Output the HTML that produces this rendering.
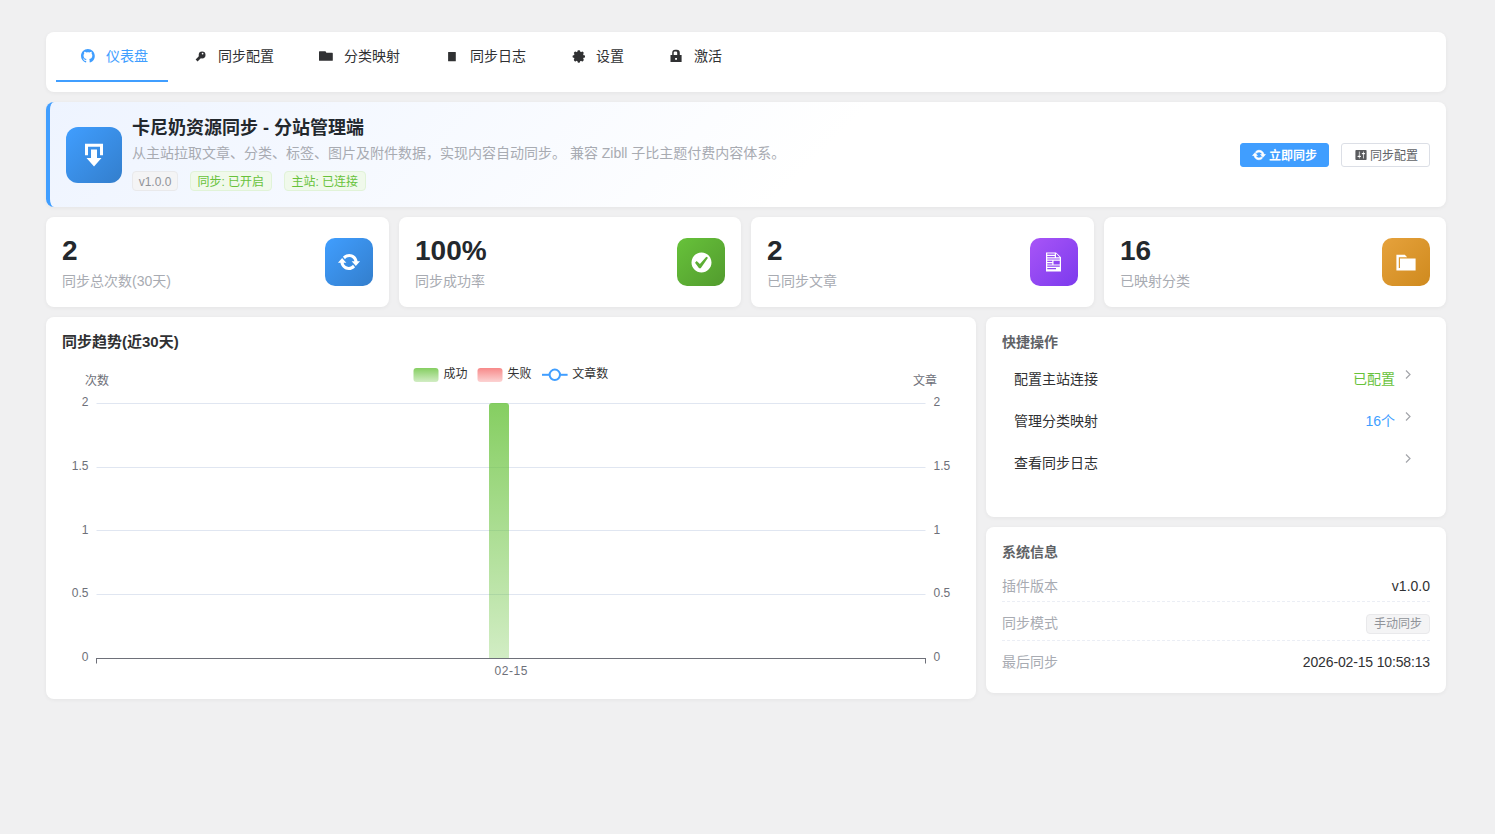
<!DOCTYPE html>
<html lang="zh-CN">
<head>
<meta charset="utf-8">
<title>卡尼奶资源同步 - 分站管理端</title>
<style>
*{box-sizing:border-box;margin:0;padding:0}
html,body{width:1495px;height:834px;overflow:hidden}
body{background:#f0f0f1;font-family:"Liberation Sans","Noto Sans CJK SC",sans-serif;color:#303133;position:relative;font-size:14px}
.card{position:absolute;background:#fff;border-radius:8px;box-shadow:0 1px 4px rgba(0,0,0,.05)}
.abs{position:absolute;white-space:nowrap}
/* nav */
#nav{left:46px;top:32px;width:1400px;height:60px}
.tab{position:absolute;top:0;height:48px;line-height:48px;font-size:14px;color:#303133;white-space:nowrap}
.tab svg{position:absolute;top:16px}
.tab span{position:absolute;top:0}
.tab.on{color:#409eff}
#navline{position:absolute;left:10px;top:48px;width:112px;height:2px;background:#409eff}
/* header */
#hdr{left:46px;top:102px;width:1400px;height:105px;border-left:4px solid #409eff;background:linear-gradient(135deg,#eef4ff 0%,#fff 55%)}
#logo{position:absolute;left:16px;top:25px;width:56px;height:56px;border-radius:12px;background:linear-gradient(135deg,#409eff,#337ecc)}
#title{left:82px;top:14px;font-size:18px;font-weight:700;color:#23282d;line-height:24px}
#desc{left:82px;top:41px;font-size:14px;color:#a8abb2;line-height:20px}
.tag{position:absolute;top:69px;height:20px;line-height:20px;font-size:12px;border-radius:4px;border:1px solid;padding:0 6px;white-space:nowrap}
.tag.g{color:#67c23a;background:#f0f9eb;border-color:#e1f3d8}
.tag.i{color:#909399;background:#f4f4f5;border-color:#e9e9eb}
.btn{position:absolute;top:41px;height:24px;line-height:22px;font-size:12px;border-radius:3px;border:1px solid;white-space:nowrap}
/* stats */
.stat{top:217px;height:90px}
.stat .num{position:absolute;left:16px;top:16px;font-size:28px;font-weight:700;color:#23282d;line-height:36px}
.stat .lab{position:absolute;left:16px;top:54px;font-size:14px;color:#a8abb2;line-height:20px}
.stat .ico{position:absolute;right:16px;top:21px;width:48px;height:48px;border-radius:10px}
.h3{position:absolute;left:16px;font-size:14px;font-weight:700;color:#303133;line-height:20px}
/* quick */
.qrow{position:absolute;left:12px;right:12px;height:42px;line-height:42px;font-size:14px;color:#303133}
.qrow .l{position:absolute;left:16px}
.qrow .r{position:absolute;right:39px}
.qrow svg{position:absolute;right:21px;top:10px}
.irow{position:absolute;left:16px;right:16px;height:38px;font-size:14px;border-bottom:1px dashed #ebeef5}
.irow .l{position:absolute;left:0;color:#a8abb2;line-height:38px}
.irow .r{position:absolute;right:0;color:#303133;line-height:38px}
</style>
</head>
<body>

<div class="card" id="nav">
  <div class="tab on" style="left:10px;width:112px"><span style="left:50px">仪表盘</span></div>
  <div class="tab" style="left:122px;width:126px"><span style="left:50px">同步配置</span></div>
  <div class="tab" style="left:248px;width:126px"><span style="left:50px">分类映射</span></div>
  <div class="tab" style="left:374px;width:126px"><span style="left:50px">同步日志</span></div>
  <div class="tab" style="left:500px;width:98px"><span style="left:50px">设置</span></div>
  <div class="tab" style="left:598px;width:98px"><span style="left:50px">激活</span></div>

  <svg class="abs" style="left:34.9px;top:17.3px" width="13.8" height="13.8" viewBox="0 0 16 16"><path fill="#409eff" d="M8 0C3.58 0 0 3.58 0 8c0 3.54 2.29 6.53 5.47 7.59.4.07.55-.17.55-.38 0-.19-.01-.82-.01-1.49-2.01.37-2.53-.49-2.69-.94-.09-.23-.48-.94-.82-1.13-.28-.15-.68-.52-.01-.53.63-.01 1.08.58 1.23.82.72 1.21 1.87.87 2.33.66.07-.52.28-.87.51-1.07-1.78-.2-3.64-.89-3.64-3.95 0-.87.31-1.59.82-2.15-.08-.2-.36-1.02.08-2.12 0 0 .67-.21 2.2.82.64-.18 1.32-.27 2-.27.68 0 1.36.09 2 .27 1.53-1.04 2.2-.82 2.2-.82.44 1.1.16 1.92.08 2.12.51.56.82 1.27.82 2.15 0 3.07-1.87 3.75-3.65 3.95.29.25.54.73.54 1.48 0 1.07-.01 1.93-.01 2.2 0 .21.15.46.55.38A8.013 8.013 0 0016 8c0-4.42-3.58-8-8-8z"/></svg>
  <svg class="abs" style="left:142px;top:12px" width="24" height="24" viewBox="188 44 24 24"><circle cx="202.1" cy="55" r="3.4" fill="#303133"/><path d="M200.3 56.8 L196.6 60.4" stroke="#303133" stroke-width="2.8" stroke-linecap="butt"/><circle cx="202.6" cy="53.6" r="0.85" fill="#fff"/></svg>
  <svg class="abs" style="left:268px;top:12px" width="24" height="24" viewBox="314 44 24 24"><path fill="#303133" d="M319.6 51.2h5.6q.5 0 .7.5l.3.7q.2.4.7.4h5.3q.6 0 .6.6v6.8q0 .6-.6.6h-12.6q-.6 0-.6-.6v-8.400q0-.6.600-.600z"/></svg>
  <svg class="abs" style="left:394px;top:12px" width="24" height="24" viewBox="440 44 24 24"><rect x="448.1" y="51.9" width="7.7" height="9.4" rx=".4" fill="#303133"/></svg>
  <svg class="abs" style="left:520px;top:12px" width="24" height="24" viewBox="566 44 24 24"><g transform="translate(578.8 56.45)" fill="#303133"><circle r="4.9"/><g><rect x="-1.3" y="-6.2" width="2.6" height="12.4" rx=".8"/><rect x="-1.3" y="-6.2" width="2.6" height="12.4" rx=".8" transform="rotate(90)"/></g><g transform="rotate(45)"><rect x="-1.3" y="-6.2" width="2.6" height="12.4" rx=".8"/><rect x="-1.3" y="-6.2" width="2.6" height="12.4" rx=".8" transform="rotate(90)"/></g></g></svg>
  <svg class="abs" style="left:618px;top:12px" width="24" height="24" viewBox="664 44 24 24"><path fill="#303133" fill-rule="evenodd" d="M670.5 55.1h1.700v-2.300a3 3 0 0 1 3-3h1.600a3 3 0 0 1 3 3v2.300h1.800v6.900h-11.100zM673.700 55.100h3.500v-2.500a1.200 1.200 0 0 0 -1.200-1.200h-1.100a1.200 1.200 0 0 0 -1.200 1.200zM675.100 58h1.900v1.700h-1.900z"/></svg>
  <div id="navline"></div>
</div>

<div class="card" id="hdr">
  <div id="logo"><svg class="abs" style="left:13px;top:13.900px" width="30" height="28.300" viewBox="0 0 20 20" preserveAspectRatio="none"><path fill="#fff" d="M14.01 4v6h2V2H4v8h2.010V4h8zm-2 2v6h3l-5 6-5-6h3V6h4z"/></svg></div>
  <div class="abs" id="title">卡尼奶资源同步 - 分站管理端</div>
  <div class="abs" id="desc">从主站拉取文章、分类、标签、图片及附件数据，实现内容自动同步。 兼容 Zibll 子比主题付费内容体系。</div>
  <div class="tag i" style="left:82px;width:46px;padding:0;text-align:center">v1.0.0</div>
  <div class="tag g" style="left:140px;width:81.5px;padding:0;text-align:center">同步: 已开启</div>
  <div class="tag g" style="left:234px;width:81.5px;padding:0;text-align:center">主站: 已连接</div>
  <div class="btn" style="left:1190px;width:89px;background:#409eff;border-color:#409eff;color:#fff;font-weight:700"><svg class="abs" style="left:11.300px;top:4.200px" width="14" height="14" viewBox="0 0 20 20"><path fill="#fff" stroke="#fff" stroke-width=".900" stroke-linejoin="round" d="M10.2 3.28c3.53 0 6.43 2.61 6.92 6h2.08l-3.5 4-3.5-4h2.320c-.45-1.970-2.210-3.450-4.320-3.450-1.450 0-2.730.71-3.540 1.780l-1.700-1.940c1.280-1.470 3.150-2.390 5.240-2.390zM9.800 16.720c-3.520 0-6.430-2.610-6.920-6h-2.080l3.500-4c1.170 1.330 2.330 2.670 3.500 4h-2.320c.45 1.970 2.210 3.450 4.320 3.450 1.450 0 2.730-.71 3.540-1.780l1.700 1.940c-1.280 1.470-3.150 2.390-5.240 2.390z"/></svg><span class="abs" style="left:28px;top:1px">立即同步</span></div>
  <div class="btn" style="left:1291px;width:89px;background:#fff;border-color:#dcdfe6;color:#606266"><svg class="abs" style="left:11.600px;top:3.600px" width="14" height="14" viewBox="0 0 20 20"><path fill="#5a5b5e" d="M18 16V4c0-.55-.45-1-1-1H3c-.55 0-1 .45-1 1v12c0 .55.45 1 1 1h14c.55 0 1-.45 1-1zM8 11h1c.55 0 1 .45 1 1s-.45 1-1 1H8v1.500c0 .28-.22.5-.5.5s-.5-.22-.5-.5V13H6c-.55 0-1-.45-1-1s.45-1 1-1h1V5.500c0-.28.22-.5.5-.5s.5.220.5.5V11zm5-2h-1c-.55 0-1-.45-1-1s.45-1 1-1h1V5.500c0-.28.22-.5.5-.5s.5.220.5.5V7h1c.55 0 1 .45 1 1s-.45 1-1 1h-1v5.500c0 .28-.22.5-.5.5s-.5-.22-.5-.5V9z"/></svg><span class="abs" style="left:28px;top:1px">同步配置</span></div>
</div>

<div class="card stat" style="left:46px;width:343px"><div class="num">2</div><div class="lab">同步总次数(30天)</div><div class="ico" style="background:linear-gradient(135deg,#409eff,#337ecc)"><svg class="abs" style="left:12px;top:12px" width="24" height="24" viewBox="0 0 20 20"><path fill="#fff" d="M10.2 3.28c3.53 0 6.43 2.61 6.92 6h2.08l-3.5 4-3.5-4h2.320c-.45-1.970-2.210-3.450-4.320-3.450-1.450 0-2.730.71-3.540 1.780l-1.700-1.940c1.280-1.470 3.150-2.390 5.240-2.390zM9.800 16.720c-3.520 0-6.430-2.610-6.920-6h-2.080l3.500-4c1.170 1.330 2.330 2.670 3.500 4h-2.320c.45 1.970 2.210 3.450 4.320 3.450 1.450 0 2.730-.71 3.540-1.780l1.700 1.940c-1.280 1.470-3.150 2.390-5.240 2.390z"/></svg></div></div>
<div class="card stat" style="left:399px;width:342px"><div class="num">100%</div><div class="lab">同步成功率</div><div class="ico" style="background:linear-gradient(135deg,#67c23a,#529b2e)"><svg class="abs" style="left:11.500px;top:11.500px" width="25" height="25" viewBox="0 0 20 20"><path fill="#fff" d="M10 2c-4.42 0-8 3.58-8 8s3.58 8 8 8 8-3.58 8-8-3.58-8-8-8zm-.615 12.660h-1.340l-3.240-4.540 1.341-1.250 2.569 2.400 5.141-5.931 1.340.94-5.811 8.381z"/></svg></div></div>
<div class="card stat" style="left:751px;width:343px"><div class="num">2</div><div class="lab">已同步文章</div><div class="ico" style="background:linear-gradient(135deg,#a855f7,#7c3aed)"><svg class="abs" style="left:11px;top:12px" width="25" height="24" viewBox="0 0 20 20" preserveAspectRatio="none"><path fill="#fff" d="M12 2l4 4v12H4V2h8zM5 3v1h6V3H5zm7 3h3l-3-3v3zM5 5v1h6V5H5zm10 3V7H5v1h10zM5 9v1h4V9H5zm10 3V9h-5v3h5zM5 11v1h4v-1H5zm10 3v-1H5v1h10zm-3 2v-1H5v1h7z"/></svg></div></div>
<div class="card stat" style="left:1104px;width:342px"><div class="num">16</div><div class="lab">已映射分类</div><div class="ico" style="background:linear-gradient(135deg,#e6a23c,#cf8a1e)"><svg class="abs" style="left:12px;top:12px" width="24" height="24" viewBox="0 0 20 20"><path fill="#fff" d="M5 7h13v10H2V4h7l2 2H4v9h1V7z"/></svg></div></div>

<div class="card" id="chart" style="left:46px;top:317px;width:930px;height:382px">
  <div class="h3" style="top:15px;font-size:15px">同步趋势(近30天)</div>
  <svg class="abs" style="left:0;top:0" width="930" height="382" viewBox="46 317 930 382" font-family="'Liberation Sans','Noto Sans CJK SC',sans-serif" font-size="12">
  <defs><linearGradient id="gg" x1="0" y1="0" x2="0" y2="1"><stop offset="0" stop-color="#67c23a" stop-opacity=".8"/><stop offset="1" stop-color="#67c23a" stop-opacity=".3"/></linearGradient><linearGradient id="gr" x1="0" y1="0" x2="0" y2="1"><stop offset="0" stop-color="#f56c6c" stop-opacity=".8"/><stop offset="1" stop-color="#f56c6c" stop-opacity=".3"/></linearGradient></defs>
  <rect x="96.5" y="403" width="829" height="1" fill="#e0e6f1"/>
  <rect x="96.5" y="467" width="829" height="1" fill="#e0e6f1"/>
  <rect x="96.5" y="530" width="829" height="1" fill="#e0e6f1"/>
  <rect x="96.5" y="594" width="829" height="1" fill="#e0e6f1"/>
  <path fill="url(#gg)" d="M489 658.400V406a3 3 0 0 1 3-3h14a3 3 0 0 1 3 3v252.400z"/>
  <rect x="96" y="658" width="830" height="1" fill="#6e7079"/>
  <rect x="96" y="658" width="1" height="5.500" fill="#6e7079"/><rect x="925" y="658" width="1" height="5.500" fill="#6e7079"/>
  <text x="88.500" y="406" text-anchor="end" fill="#6e7079">2</text>
  <text x="933.500" y="406" fill="#6e7079">2</text>
  <text x="88.500" y="470" text-anchor="end" fill="#6e7079">1.5</text>
  <text x="933.500" y="470" fill="#6e7079">1.5</text>
  <text x="88.500" y="534" text-anchor="end" fill="#6e7079">1</text>
  <text x="933.500" y="534" fill="#6e7079">1</text>
  <text x="88.500" y="597" text-anchor="end" fill="#6e7079">0.5</text>
  <text x="933.500" y="597" fill="#6e7079">0.5</text>
  <text x="88.500" y="661" text-anchor="end" fill="#6e7079">0</text>
  <text x="933.500" y="661" fill="#6e7079">0</text>
  <text x="511.300" y="675" text-anchor="middle" fill="#6e7079" letter-spacing=".6">02-15</text>
  <text x="97" y="384.500" text-anchor="middle" fill="#6e7079">次数</text>
  <text x="925" y="384.500" text-anchor="middle" fill="#6e7079">文章</text>
  <rect x="413.500" y="368" width="25" height="14" rx="3" fill="url(#gg)"/>
  <text x="443.500" y="378" fill="#333">成功</text>
  <rect x="477.500" y="368" width="25" height="14" rx="3" fill="url(#gr)"/>
  <text x="507.500" y="378" fill="#333">失败</text>
  <path d="M542 374.800h25.600" stroke="#409eff" stroke-width="2"/><circle cx="554.800" cy="374.800" r="5.200" fill="#fff" stroke="#409eff" stroke-width="2"/>
  <text x="572.300" y="378" fill="#333">文章数</text>
  </svg>
</div>

<div class="card" id="quick" style="left:986px;top:317px;width:460px;height:200px">
  <div class="h3" style="top:14.500px;color:#606266">快捷操作</div>
  <div class="qrow" style="top:41px"><span class="l">配置主站连接</span><span class="r" style="color:#67c23a">已配置</span><svg width="10" height="14" viewBox="0 0 10 14"><path d="M3 2.500l4 4-4 4" fill="none" stroke="#a3a5aa" stroke-width="1.200"/></svg></div>
  <div class="qrow" style="top:83px"><span class="l">管理分类映射</span><span class="r" style="color:#409eff">16个</span><svg width="10" height="14" viewBox="0 0 10 14"><path d="M3 2.500l4 4-4 4" fill="none" stroke="#a3a5aa" stroke-width="1.200"/></svg></div>
  <div class="qrow" style="top:125px"><span class="l">查看同步日志</span><svg width="10" height="14" viewBox="0 0 10 14"><path d="M3 2.500l4 4-4 4" fill="none" stroke="#a3a5aa" stroke-width="1.200"/></svg></div>
</div>

<div class="card" id="sys" style="left:986px;top:527px;width:460px;height:166px">
  <div class="h3" style="top:14.500px;color:#606266">系统信息</div>
  <div class="irow" style="top:40px;height:35px"><span class="l">插件版本</span><span class="r">v1.0.0</span></div>
  <div class="irow" style="top:75px;height:39px"><span class="l" style="top:2px">同步模式</span><span class="abs" style="right:0;top:12px;width:64px;height:20px;line-height:18px;text-align:center;font-size:12px;color:#909399;background:#f4f4f5;border:1px solid #e9e9eb;border-radius:4px">手动同步</span></div>
  <div class="irow" style="top:115.500px;border-bottom:none"><span class="l">最后同步</span><span class="r" style="letter-spacing:-.15px">2026-02-15 10:58:13</span></div>
</div>

</body>
</html>
